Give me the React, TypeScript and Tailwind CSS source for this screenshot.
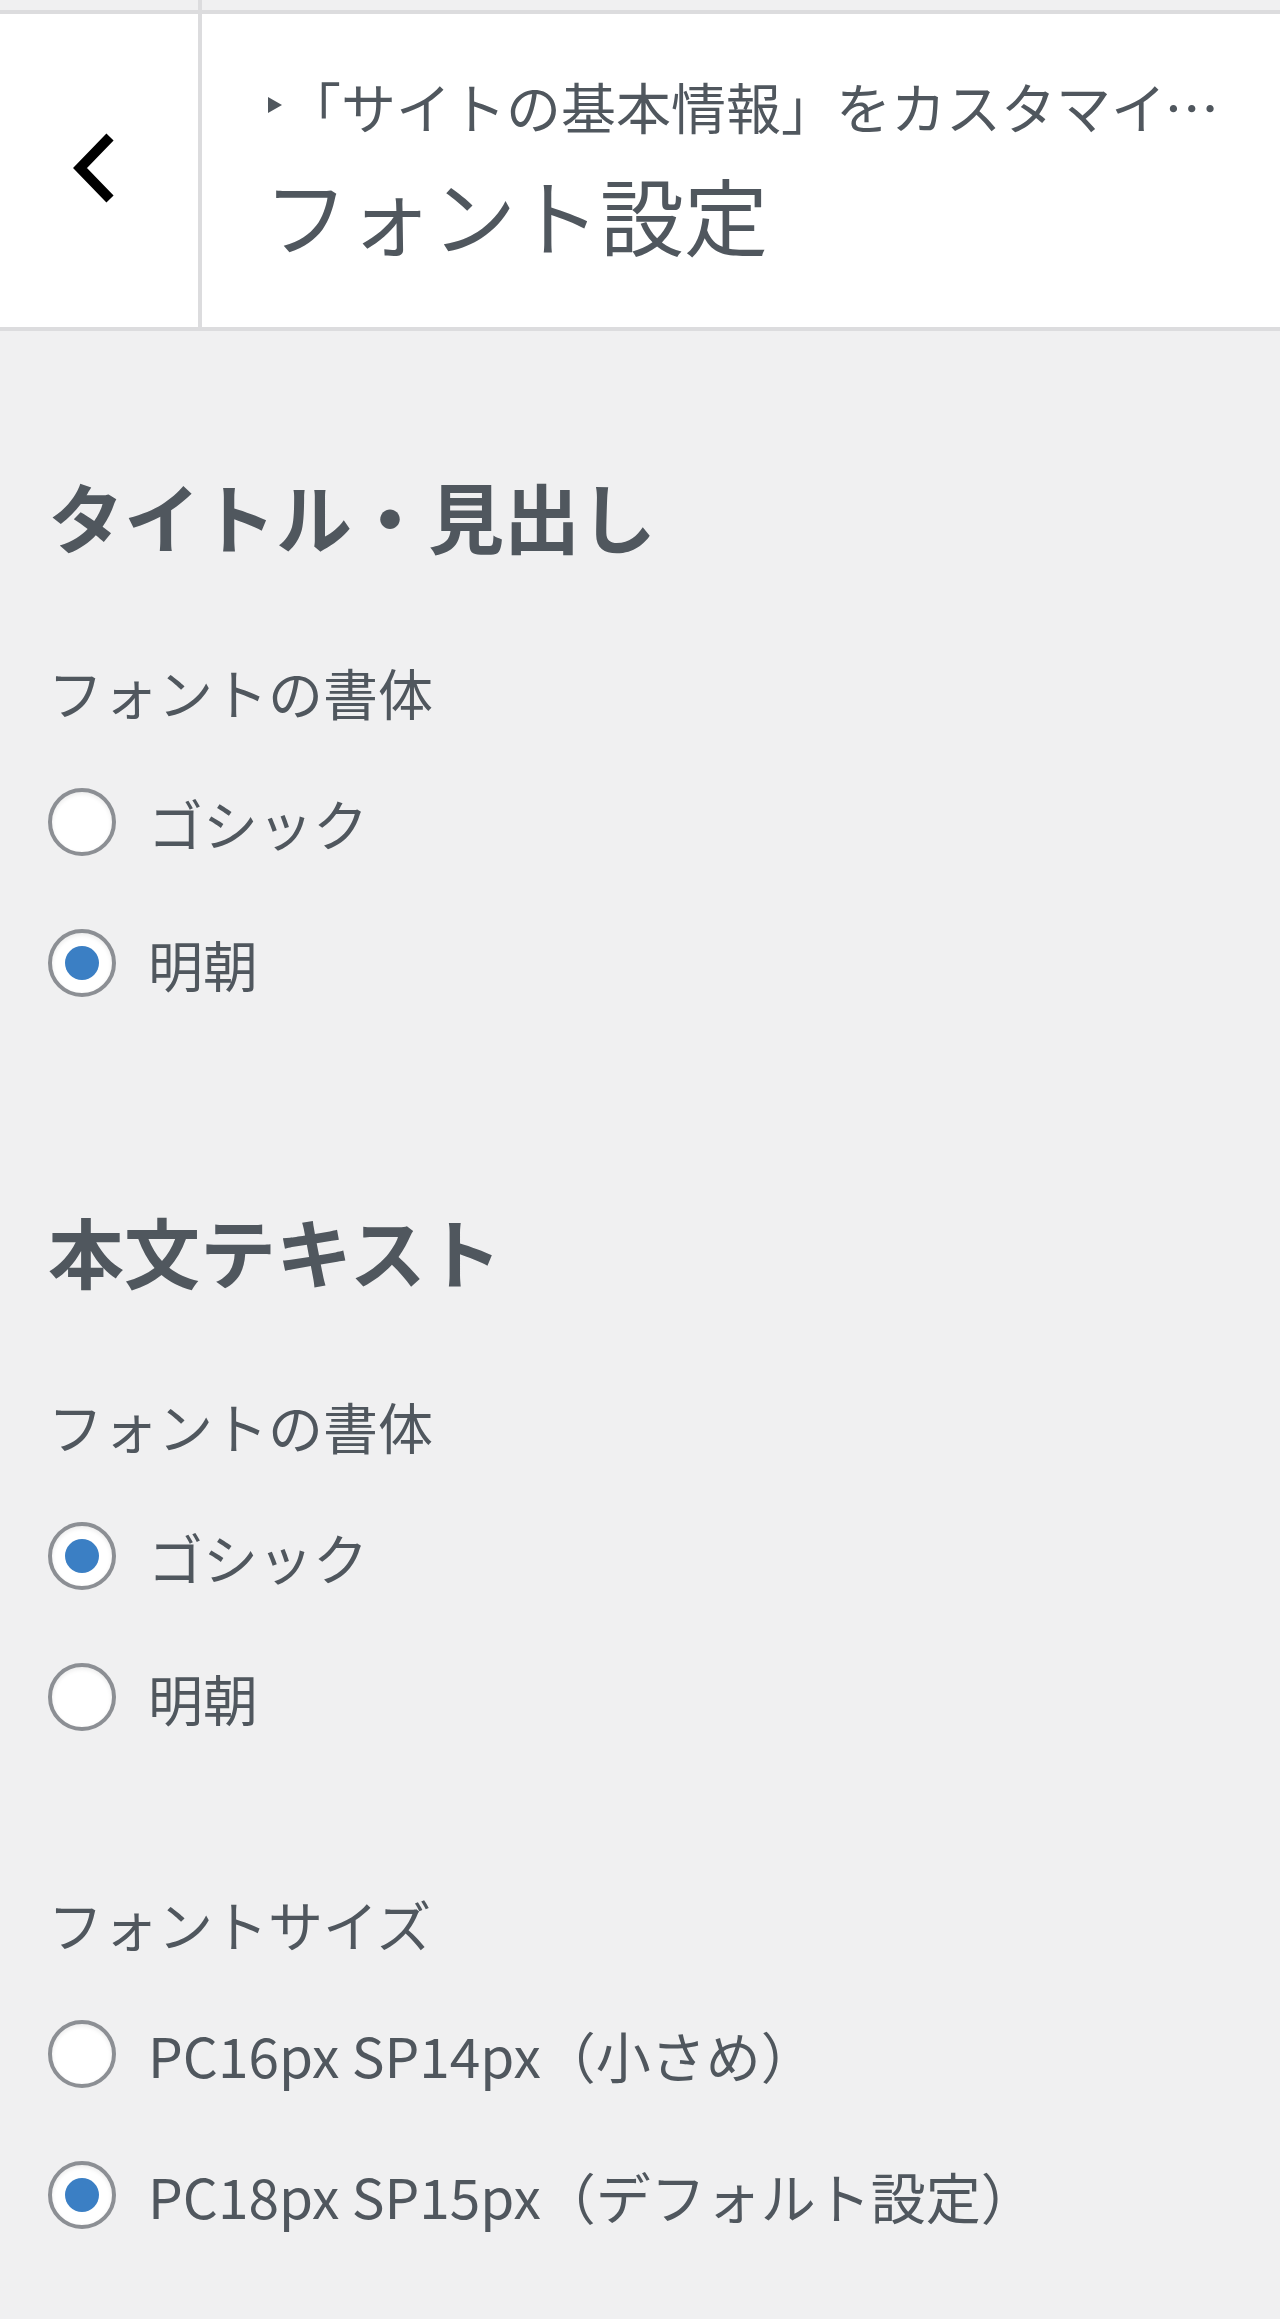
import React from 'react';

const JP = { fontFamily: '"Noto Sans CJK JP", "Noto Sans", sans-serif' };
const CRUMB = { fontFamily: 'Roboto, "Noto Sans CJK JP", sans-serif' };

interface Option {
  label: string;
  checked?: boolean;
}

function Radio({ checked }: { checked?: boolean }) {
  return (
    <span className="flex h-[68px] w-[68px] shrink-0 items-center justify-center rounded-full border-[4px] border-[#8c8f94] bg-white shadow-[inset_0_2px_4px_rgba(0,0,0,0.08)]">
      {checked && <span className="h-[34px] w-[34px] rounded-full bg-[#3b7fc4]" />}
    </span>
  );
}

function Field({ label, options, className = '' }: { label: string; options: Option[]; className?: string }) {
  return (
    <div className={className}>
      <p className="text-[55px] leading-[70px] text-[#50575e]">{label}</p>
      <ul className="mt-[25px]">
        {options.map((opt) => (
          <li key={opt.label} className="flex h-[141px] items-center gap-[32px]">
            <Radio checked={opt.checked} />
            <span className="text-[55px] leading-[70px] text-[#50575e]">{opt.label}</span>
          </li>
        ))}
      </ul>
    </div>
  );
}

export default function App() {
  return (
    <div className="min-h-[2319px] w-full bg-[#f0f0f1]" style={JP}>
      {/* Section header */}
      <header className="flex h-[331px] border-b-[4px] border-[#dcdcde]">
        <div className="flex w-[202px] shrink-0 flex-col border-r-[4px] border-[#dcdcde]">
          <div className="h-[10px] bg-[#f0f0f1]" />
          <button className="flex flex-1 items-center justify-center border-t-[4px] border-[#dcdcde] bg-white pb-[6px] pr-[8px]">
            <svg width="50" height="76" viewBox="0 0 50 76" fill="none">
              <polyline points="40,7 10,38 40,69" stroke="#000" strokeWidth="10" strokeLinejoin="miter" />
            </svg>
          </button>
        </div>
        <div className="flex min-w-0 flex-1 flex-col">
          <div className="h-[10px] bg-[#f0f0f1]" />
          <div className="flex-1 border-t-[4px] border-[#dcdcde] bg-white pl-[62px] pr-[45px] pt-[58px]">
            <div className="flex h-[66px] items-center pl-[4px] text-[55px] leading-[66px] text-[#50575e]" style={CRUMB}>
              <span className="mr-[4px] inline-block h-0 w-0 shrink-0 border-y-[8px] border-l-[14px] border-y-transparent border-l-[#50575e]" />
              <span className="min-w-0 truncate" style={JP}>
                「サイトの基本情報」をカスタマイズ中
              </span>
            </div>
            <h2 className="mt-[26px] text-[84px] font-normal leading-[100px] text-[#50575e]">フォント設定</h2>
          </div>
        </div>
      </header>

      <main className="px-[48px] pb-[56px] pt-[134px]">
        <section>
          <h3 className="text-[76px] font-bold leading-[100px] text-[#50575e]">タイトル・見出し</h3>
          <Field
            className="mt-[91px]"
            label="フォントの書体"
            options={[{ label: 'ゴシック' }, { label: '明朝', checked: true }]}
          />
        </section>

        <section className="mt-[167px]">
          <h3 className="text-[76px] font-bold leading-[100px] text-[#50575e]">本文テキスト</h3>
          <Field
            className="mt-[90px]"
            label="フォントの書体"
            options={[{ label: 'ゴシック', checked: true }, { label: '明朝' }]}
          />
          <Field
            className="mt-[121px]"
            label="フォントサイズ"
            options={[
              { label: 'PC16px SP14px（小さめ）' },
              { label: 'PC18px SP15px（デフォルト設定）', checked: true },
            ]}
          />
        </section>
      </main>
    </div>
  );
}
